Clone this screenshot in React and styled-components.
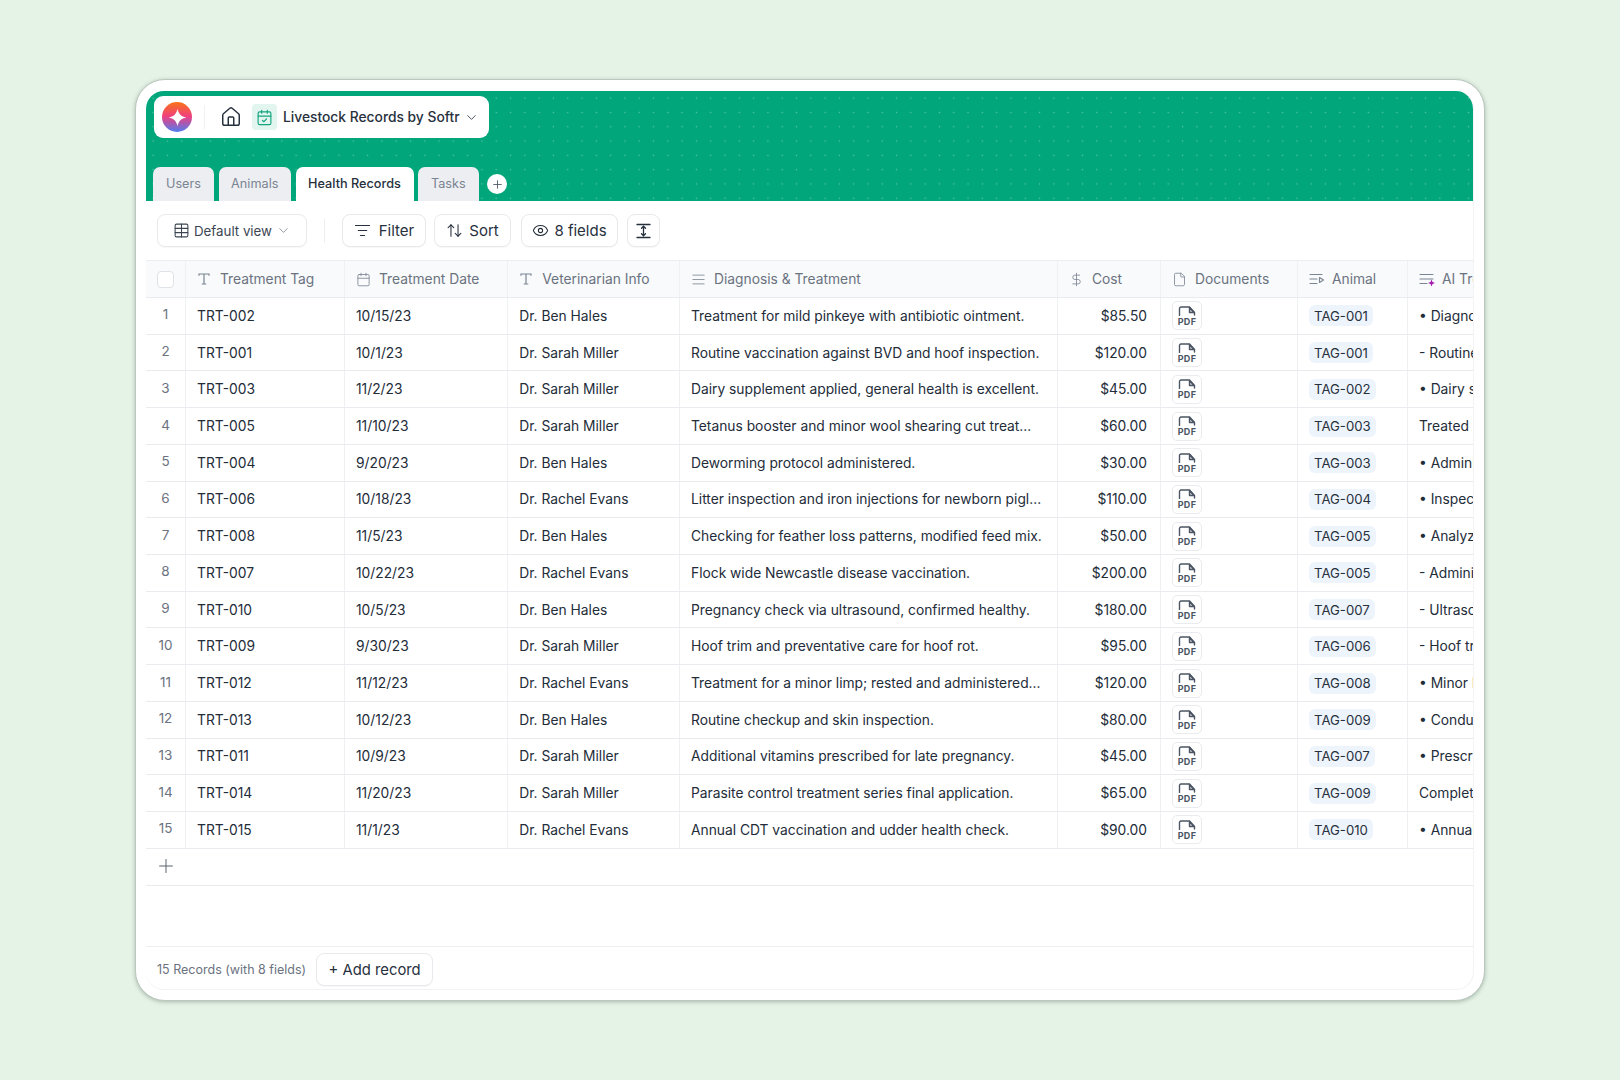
import React from "react";
import styled, { createGlobalStyle } from "styled-components";
import {
  House,
  CalendarCheck,
  ChevronDown,
  Table,
  ListFilter,
  ArrowUpDown,
  Eye,
  Plus,
  Calendar,
  AlignJustify,
  DollarSign,
  File,
} from "lucide-react";

const Global = createGlobalStyle`
  * { box-sizing: border-box; }
  html, body { margin: 0; padding: 0; }
  body { background: #e5f3e6; font-family: Inter, "Liberation Sans", sans-serif; color: #1f2937; }
  svg { flex: none; }
`;

const Stage = styled.div`
  min-height: 1080px;
  display: flex;
  align-items: center;
  justify-content: center;
`;
const Frame = styled.div`
  width: 1350px;
  height: 922px;
  padding: 11px 10px 10px;
  background: #fff;
  border-radius: 30px;
  border: 1px solid #bcc7bf;
  box-shadow: 0 1px 4px rgba(70, 100, 80, 0.4);
`;
const Inner = styled.div`
  height: 100%;
  display: flex;
  flex-direction: column;
  border-radius: 18px;
  border: 1px solid #f1f3f4;
  border-width: 0 1px 1px 0;
  overflow: hidden;
`;
const Hero = styled.div`
  height: 110px;
  flex: none;
  display: flex;
  flex-direction: column;
  justify-content: space-between;
  padding: 5px 0 0 7px;
  background-color: #01a67b;
  background-image: radial-gradient(rgba(255, 255, 255, 0.32) 0.8px, transparent 1px);
  background-size: 14.3px 14.3px;
`;
const AppPill = styled.div`
  width: 335px;
  height: 42px;
  margin-left: 1px;
  background: #fff;
  border-radius: 9px;
  display: flex;
  align-items: center;
  padding-left: 8px;
`;
const Logo = styled.div`
  width: 30px;
  height: 30px;
  border-radius: 50%;
  background: linear-gradient(180deg, #f97316 0%, #ef3f80 48%, #4f7df0 100%);
  display: flex;
  align-items: center;
  justify-content: center;
`;
const PillSep = styled.div`
  width: 1px;
  height: 24px;
  background: #f0f1f3;
  margin: 0 15px 0 12px;
`;
const HomeBtn = styled.div`
  width: 22px;
  display: flex;
  color: #27303d;
  margin-right: 10px;
`;
const CalBox = styled.div`
  width: 25px;
  height: 26px;
  border-radius: 4px;
  background: #e3f5ef;
  color: #12a57e;
  display: flex;
  align-items: center;
  justify-content: center;
  margin-right: 6px;
`;
const AppName = styled.div`
  font-size: 13.8px;
  font-weight: 500;
  color: #27303d;
  white-space: nowrap;
  margin-right: 5px;
`;
const Chevron = styled.span`
  display: flex;
  color: ${(p) => p.$color || "#4b5563"};
`;
const Tabs = styled.div`
  display: flex;
  align-items: flex-end;
  gap: 4.5px;
`;
const Tab = styled.div`
  width: ${(p) => p.$w}px;
  height: 34.5px;
  border-radius: 7px 7px 0 0;
  background: ${(p) => (p.$active ? "#fff" : "#eceef1")};
  color: ${(p) => (p.$active ? "#27303d" : "#7b8491")};
  font-size: 12.7px;
  font-weight: ${(p) => (p.$active ? 500 : 400)};
  display: flex;
  align-items: center;
  justify-content: center;
`;
const AddTab = styled.div`
  width: 20px;
  height: 20px;
  border-radius: 50%;
  background: #fff;
  color: #4b5563;
  display: flex;
  align-items: center;
  justify-content: center;
  margin: 0 0 7px 4px;
`;
const Toolbar = styled.div`
  height: 59px;
  flex: none;
  display: flex;
  align-items: center;
  padding: 0 0 0 11px;
`;
const ToolBtn = styled.div`
  width: ${(p) => p.$w}px;
  height: 33px;
  margin-right: ${(p) => p.$mr || 0}px;
  border: 1px solid #e7e9ec;
  border-radius: 8px;
  background: #fff;
  display: flex;
  align-items: center;
  justify-content: center;
  gap: ${(p) => p.$gap ?? 7}px;
  font-size: ${(p) => p.$fs || 15}px;
  color: ${(p) => p.$color || "#27303d"};
  box-shadow: 0 1px 1px rgba(16, 24, 40, 0.03);
`;
const ToolSep = styled.div`
  width: 1px;
  height: 24px;
  background: #eceef0;
  margin: 0 17px;
`;
const Grid = styled.div`
  flex: none;
  overflow: hidden;
`;
const Row = styled.div`
  display: flex;
  width: max-content;
  height: ${(p) => p.$h}px;
  background: ${(p) => p.$bg || "#fff"};
  border-bottom: 1px solid #e9ebee;
  ${(p) => p.$top && "border-top: 1px solid #eceef1;"}
`;
const Cell = styled.div`
  width: ${(p) => p.$w}px;
  flex: none;
  display: flex;
  align-items: center;
  justify-content: ${(p) => (p.$right ? "flex-end" : "flex-start")};
  padding: ${(p) => (p.$right ? "0 13px 0 0" : "0 0 0 11px")};
  border-right: 1px solid #eef0f2;
  font-size: 13.8px;
  color: #232c39;
  white-space: nowrap;
  overflow: hidden;
`;
const NumCell = styled(Cell)`
  justify-content: center;
  padding: 0 0 3px;
  font-size: 13.5px;
  color: #6b7280;
`;
const HeadCell = styled(Cell)`
  color: #6b7280;
  gap: ${(p) => p.$gap ?? 9}px;
  font-size: 13.8px;
`;
const CheckCell = styled(Cell)`
  justify-content: center;
  padding: 0;
`;
const CheckBox = styled.div`
  width: 17px;
  height: 17px;
  border: 1px solid #dfe2e6;
  border-radius: 4px;
  background: #fff;
`;
const Tile = styled.div`
  width: 30px;
  height: 29px;
  border: 1px solid #e9ebee;
  border-radius: 5px;
  display: flex;
  flex-direction: column;
  align-items: center;
  justify-content: center;
  color: #4b5563;
`;
const PdfLabel = styled.span`
  font-size: 9px;
  line-height: 9px;
  font-weight: 700;
  letter-spacing: 0.3px;
  margin-top: 1px;
`;
const Tag = styled.span`
  height: 21px;
  padding: 0 5px;
  background: #eef4fb;
  border-radius: 6px;
  display: flex;
  align-items: center;
  font-size: 13.2px;
  color: #27303d;
`;
const AddRow = styled.div`
  height: 37px;
  flex: none;
  border-bottom: 1px solid #e9ebee;
  padding: 0 0 2px 9px;
  display: flex;
  align-items: center;
  color: #5b6472;
`;
const Spacer = styled.div`
  flex: 1;
`;
const Footer = styled.div`
  height: 43px;
  flex: none;
  border-top: 1px solid #eceef0;
  display: flex;
  align-items: center;
  padding: 3px 0 0 11px;
  gap: 10px;
`;
const Count = styled.div`
  font-size: 12.5px;
  color: #6b7280;
  white-space: nowrap;
`;

const SerifT = () => (
  <svg width="14" height="14" viewBox="0 0 14 14" fill="none" stroke="#7b8491" strokeWidth="1.2" strokeLinecap="round">
    <path d="M2 3.200V2h10v1.200M7 2v10M5.200 12h3.600" />
  </svg>
);
const LinkIcon = () => (
  <svg width="16" height="14" viewBox="0 0 16 14" fill="none" stroke="#7b8491" strokeWidth="1.1" strokeLinecap="round" strokeLinejoin="round">
    <path d="M1 2.500h12M1 7h7M1 11.500h7M10.500 5.500l4 2.500-4 2.500z" />
  </svg>
);
const AiIcon = () => (
  <svg width="17" height="15" viewBox="0 0 17 15" fill="none" strokeLinecap="round">
    <path d="M1 2.500h13M1 7h13M1 11.500h7" stroke="#7b8491" strokeWidth="1.1" />
    <path d="M12.500 7.500l1 2.500 2.500 1-2.500 1-1 2.500-1-2.500-2.500-1 2.500-1z" fill="#a21caf" />
  </svg>
);
const RowHeightIcon = () => (
  <svg width="15" height="16" viewBox="0 0 15 16" fill="none" stroke="#27303d" strokeWidth="1.3" strokeLinecap="round" strokeLinejoin="round">
    <path d="M1 1.500h13M1 14.500h13M7.500 3.500v9M5.500 5.200l2-2 2 2M5.500 10.800l2 2 2-2" />
  </svg>
);
const Spark = () => (
  <svg width="21" height="21" viewBox="0 0 18 18" fill="#fff">
    <path d="M9 1.500c.7 4.200 3.300 6.800 7.500 7.500-4.200.7-6.800 3.300-7.500 7.500C8.300 12.300 5.700 9.700 1.500 9 5.700 8.300 8.300 5.700 9 1.500z" />
  </svg>
);
const PdfPage = () => (
  <svg width="18" height="10" viewBox="0 0 18 10" fill="none" stroke="#4b5563" strokeWidth="1.4" strokeLinejoin="round" strokeLinecap="round">
    <path d="M1.500 9.500V2.500a1.500 1.500 0 0 1 1.500-1.500h8.500l5 5.500v2.500" />
    <path d="M11.500 1.500l4.500 5h-4.500z" fill="#4b5563" fillOpacity="0.25" />
  </svg>
);

const widths = [40, 159, 163.3, 171.7, 378, 103, 137, 110, 160];

const records = [
  ["TRT-002", "10/15/23", "Dr. Ben Hales", "Treatment for mild pinkeye with antibiotic ointment.", "$85.50", "TAG-001", "• Diagnosed mild pinkeye"],
  ["TRT-001", "10/1/23", "Dr. Sarah Miller", "Routine vaccination against BVD and hoof inspection.", "$120.00", "TAG-001", "- Routine vaccination"],
  ["TRT-003", "11/2/23", "Dr. Sarah Miller", "Dairy supplement applied, general health is excellent.", "$45.00", "TAG-002", "• Dairy supplement"],
  ["TRT-005", "11/10/23", "Dr. Sarah Miller", "Tetanus booster and minor wool shearing cut treat...", "$60.00", "TAG-003", "Treated wool shearing"],
  ["TRT-004", "9/20/23", "Dr. Ben Hales", "Deworming protocol administered.", "$30.00", "TAG-003", "• Administered protocol"],
  ["TRT-006", "10/18/23", "Dr. Rachel Evans", "Litter inspection and iron injections for newborn pigl...", "$110.00", "TAG-004", "• Inspected litter"],
  ["TRT-008", "11/5/23", "Dr. Ben Hales", "Checking for feather loss patterns, modified feed mix.", "$50.00", "TAG-005", "• Analyzed feather loss"],
  ["TRT-007", "10/22/23", "Dr. Rachel Evans", "Flock wide Newcastle disease vaccination.", "$200.00", "TAG-005", "- Administered vaccine"],
  ["TRT-010", "10/5/23", "Dr. Ben Hales", "Pregnancy check via ultrasound, confirmed healthy.", "$180.00", "TAG-007", "- Ultrasound check"],
  ["TRT-009", "9/30/23", "Dr. Sarah Miller", "Hoof trim and preventative care for hoof rot.", "$95.00", "TAG-006", "- Hoof trim completed"],
  ["TRT-012", "11/12/23", "Dr. Rachel Evans", "Treatment for a minor limp; rested and administered...", "$120.00", "TAG-008", "• Minor limp treated"],
  ["TRT-013", "10/12/23", "Dr. Ben Hales", "Routine checkup and skin inspection.", "$80.00", "TAG-009", "• Conducted checkup"],
  ["TRT-011", "10/9/23", "Dr. Sarah Miller", "Additional vitamins prescribed for late pregnancy.", "$45.00", "TAG-007", "• Prescribed vitamins"],
  ["TRT-014", "11/20/23", "Dr. Sarah Miller", "Parasite control treatment series final application.", "$65.00", "TAG-009", "Completed parasite"],
  ["TRT-015", "11/1/23", "Dr. Rachel Evans", "Annual CDT vaccination and udder health check.", "$90.00", "TAG-010", "• Annual vaccination"],
];

const headers = [
  ["Treatment Tag", <SerifT />, 9],
  ["Treatment Date", <Calendar size={15} strokeWidth={1.3} color="#7b8491" />, 8],
  ["Veterinarian Info", <SerifT />, 9],
  ["Diagnosis & Treatment", <AlignJustify size={15} strokeWidth={1.3} color="#7b8491" />, 8],
  ["Cost", <DollarSign size={15} strokeWidth={1.3} color="#7b8491" />, 8],
  ["Documents", <File size={15} strokeWidth={1.3} color="#7b8491" />, 8],
  ["Animal", <LinkIcon />, 7],
  ["AI Treatment Summary", <AiIcon />, 6],
];

export default function App() {
  return (
    <Stage>
      <Global />
      <Frame>
        <Inner>
          <Hero>
            <AppPill>
              <Logo>
                <Spark />
              </Logo>
              <PillSep />
              <HomeBtn>
                <House size={22} strokeWidth={1.6} />
              </HomeBtn>
              <CalBox>
                <CalendarCheck size={17} strokeWidth={1.6} />
              </CalBox>
              <AppName>Livestock Records by Softr</AppName>
              <Chevron>
                <ChevronDown size={15} strokeWidth={1.6} />
              </Chevron>
            </AppPill>
            <Tabs>
              <Tab $w={61}>Users</Tab>
              <Tab $w={72.5}>Animals</Tab>
              <Tab $w={118} $active>
                Health Records
              </Tab>
              <Tab $w={60.5}>Tasks</Tab>
              <AddTab>
                <Plus size={13} strokeWidth={1.6} />
              </AddTab>
            </Tabs>
          </Hero>
          <Toolbar>
            <ToolBtn $w={150} $fs={13.3} $gap={4} $color="#3c4552">
              <Table size={17} strokeWidth={1.5} />
              Default view
              <Chevron $color="#8a929e">
                <ChevronDown size={15} strokeWidth={1.5} />
              </Chevron>
            </ToolBtn>
            <ToolSep />
            <ToolBtn $w={84} $mr={8} $gap={8}>
              <ListFilter size={17} strokeWidth={1.5} />
              Filter
            </ToolBtn>
            <ToolBtn $w={77} $mr={10} $gap={6}>
              <ArrowUpDown size={17} strokeWidth={1.5} />
              Sort
            </ToolBtn>
            <ToolBtn $w={97} $mr={9} $gap={5}>
              <Eye size={17} strokeWidth={1.5} />8 fields
            </ToolBtn>
            <ToolBtn $w={33}>
              <RowHeightIcon />
            </ToolBtn>
          </Toolbar>
          <Grid>
            <Row $h={38} $bg="#f8fafb" $top>
              <CheckCell $w={widths[0]}>
                <CheckBox />
              </CheckCell>
              {headers.map(([label, icon, gap], i) => (
                <HeadCell key={label} $w={widths[i + 1]} $gap={gap}>
                  {icon}
                  {label}
                </HeadCell>
              ))}
            </Row>
            {records.map((r, i) => (
              <Row key={r[0]} $h={36.73}>
                <NumCell $w={widths[0]}>{i + 1}</NumCell>
                <Cell $w={widths[1]}>{r[0]}</Cell>
                <Cell $w={widths[2]}>{r[1]}</Cell>
                <Cell $w={widths[3]}>{r[2]}</Cell>
                <Cell $w={widths[4]}>{r[3]}</Cell>
                <Cell $w={widths[5]} $right>
                  {r[4]}
                </Cell>
                <Cell $w={widths[6]}>
                  <Tile>
                    <PdfPage />
                    <PdfLabel>PDF</PdfLabel>
                  </Tile>
                </Cell>
                <Cell $w={widths[7]}>
                  <Tag>{r[5]}</Tag>
                </Cell>
                <Cell $w={widths[8]}>{r[6]}</Cell>
              </Row>
            ))}
          </Grid>
          <AddRow>
            <Plus size={22} strokeWidth={1.1} />
          </AddRow>
          <Spacer />
          <Footer>
            <Count>15 Records (with 8 fields)</Count>
            <ToolBtn $w={117} $fs={14.8} $gap={0}>
              + Add record
            </ToolBtn>
          </Footer>
        </Inner>
      </Frame>
    </Stage>
  );
}
